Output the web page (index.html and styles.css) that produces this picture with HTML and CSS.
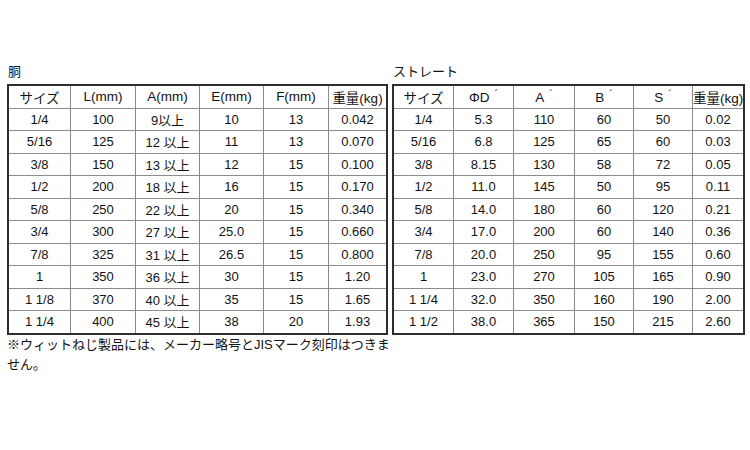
FILE: index.html
```html
<!DOCTYPE html>
<html lang="ja">
<head>
<meta charset="utf-8">
<link rel="stylesheet" href="styles.css">
</head>
<body>
<div class="page">
  <section class="block left">
    <div class="title">胴</div>
    <table class="spec spec-a">
      <thead>
        <tr><th>サイズ</th><th>L(mm)</th><th>A(mm)</th><th>E(mm)</th><th>F(mm)</th><th>重量(kg)</th></tr>
      </thead>
      <tbody>
        <tr><td>1/4</td><td>100</td><td>9以上</td><td>10</td><td>13</td><td>0.042</td></tr>
        <tr><td>5/16</td><td>125</td><td>12 以上</td><td>11</td><td>13</td><td>0.070</td></tr>
        <tr><td>3/8</td><td>150</td><td>13 以上</td><td>12</td><td>15</td><td>0.100</td></tr>
        <tr><td>1/2</td><td>200</td><td>18 以上</td><td>16</td><td>15</td><td>0.170</td></tr>
        <tr><td>5/8</td><td>250</td><td>22 以上</td><td>20</td><td>15</td><td>0.340</td></tr>
        <tr><td>3/4</td><td>300</td><td>27 以上</td><td>25.0</td><td>15</td><td>0.660</td></tr>
        <tr><td>7/8</td><td>325</td><td>31 以上</td><td>26.5</td><td>15</td><td>0.800</td></tr>
        <tr><td>1</td><td>350</td><td>36 以上</td><td>30</td><td>15</td><td>1.20</td></tr>
        <tr><td>1 1/8</td><td>370</td><td>40 以上</td><td>35</td><td>15</td><td>1.65</td></tr>
        <tr><td>1 1/4</td><td>400</td><td>45 以上</td><td>38</td><td>20</td><td>1.93</td></tr>
      </tbody>
    </table>
    <p class="note">※ウィットねじ製品には、メーカー略号とJISマーク刻印はつきま<br>せん。</p>
  </section>
  <section class="block right">
    <div class="title">ストレート</div>
    <table class="spec spec-b">
      <thead>
        <tr><th>サイズ</th><th>ΦD<span class="pr">´</span></th><th>A<span class="pr">´</span></th><th>B<span class="pr">´</span></th><th>S<span class="pr">´</span></th><th>重量(kg)</th></tr>
      </thead>
      <tbody>
        <tr><td>1/4</td><td>5.3</td><td>110</td><td>60</td><td>50</td><td>0.02</td></tr>
        <tr><td>5/16</td><td>6.8</td><td>125</td><td>65</td><td>60</td><td>0.03</td></tr>
        <tr><td>3/8</td><td>8.15</td><td>130</td><td>58</td><td>72</td><td>0.05</td></tr>
        <tr><td>1/2</td><td>11.0</td><td>145</td><td>50</td><td>95</td><td>0.11</td></tr>
        <tr><td>5/8</td><td>14.0</td><td>180</td><td>60</td><td>120</td><td>0.21</td></tr>
        <tr><td>3/4</td><td>17.0</td><td>200</td><td>60</td><td>140</td><td>0.36</td></tr>
        <tr><td>7/8</td><td>20.0</td><td>250</td><td>95</td><td>155</td><td>0.60</td></tr>
        <tr><td>1</td><td>23.0</td><td>270</td><td>105</td><td>165</td><td>0.90</td></tr>
        <tr><td>1 1/4</td><td>32.0</td><td>350</td><td>160</td><td>190</td><td>2.00</td></tr>
        <tr><td>1 1/2</td><td>38.0</td><td>365</td><td>150</td><td>215</td><td>2.60</td></tr>
      </tbody>
    </table>
  </section>
</div>
</body>
</html>
```
FILE: styles.css
```css
html, body {
  margin: 0;
  padding: 0;
  background: #ffffff;
}
body {
  font-family: "Liberation Sans", "Noto Sans CJK JP", sans-serif;
  font-size: 13px;
  color: #121212;
}
.page {
  display: flex;
  gap: 4px;
  padding: 64px 0 0 7px;
}
.block.left { width: 381px; }
.block.right { width: 353px; }
.title {
  height: 20px;
  line-height: 16px;
  padding-left: 1px;
}
.spec {
  border-collapse: collapse;
  border: 2px solid #2e2e2e;
  table-layout: fixed;
  width: 100%;
}
.spec th, .spec td {
  border: 1px solid #8c8c8c;
  padding: 0;
  height: 21.5px;
  text-align: center;
  font-weight: normal;
  white-space: nowrap;
}
.spec th { font-size: 13.5px; }
.spec-a th:nth-child(1) { width: 61px; }
.spec-a th:nth-child(2) { width: 64px; }
.spec-a th:nth-child(3) { width: 63px; }
.spec-a th:nth-child(4) { width: 63px; }
.spec-a th:nth-child(5) { width: 64px; }
.spec-b th:nth-child(1) { width: 59px; }
.spec-b th:nth-child(2) { width: 59px; }
.spec-b th:nth-child(3) { width: 60px; }
.spec-b th:nth-child(4) { width: 58px; }
.spec-b th:nth-child(5) { width: 58px; }
.pr {
  font-size: 11px;
  margin-left: 5px;
  vertical-align: 4px;
}
.note {
  margin: 0;
  line-height: 20px;
  white-space: nowrap;
}
```
